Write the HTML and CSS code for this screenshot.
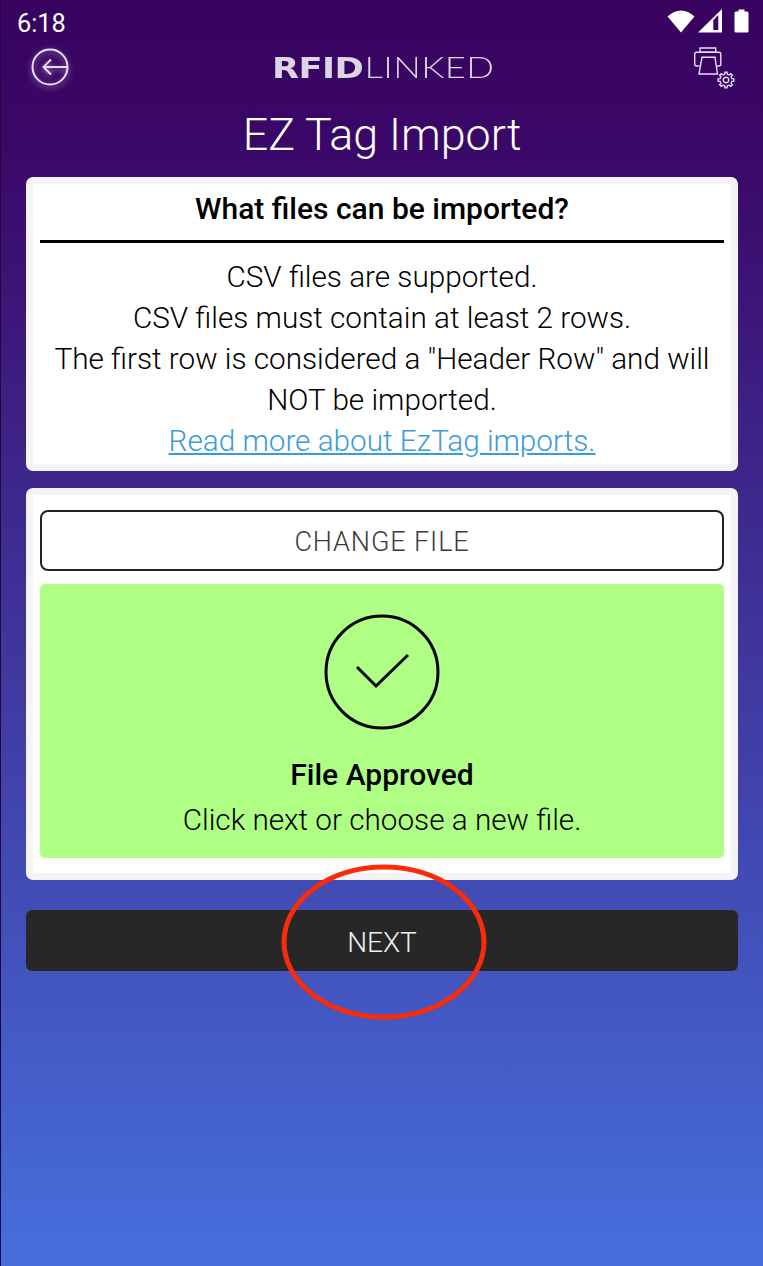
FILE: index.html
```html
<!DOCTYPE html>
<html>
  <head>
    <meta charset="utf-8">
    <title>EZ Tag Import</title>
    <link rel="stylesheet" href="styles.css">
  </head>
  <body>
    <div class="page">
      <div class="status-bar">
        <span class="status-time">6:18</span>
        <div class="status-icons">
          <svg class="wifi" width="28" height="23" viewBox="0 0 28 23">
            <path d="M0.5 6.5 Q7 0.5 14 0.5 Q21 0.5 27.5 6.5 L14 22.5 Z" fill="#fff"/>
          </svg>
          <svg class="signal" width="24" height="24" viewBox="0 0 24 24">
            <path d="M0 23.5 L24 0 V23.5 Z" fill="#fff"/>
            <path d="M15.3 11 L20.3 6 V21 H15.3 Z" fill="#3a0565"/>
          </svg>
          <svg width="15" height="24" viewBox="0 0 15 24">
            <path d="M4.5 0.5 H10.5 V2.5 H13 Q14.5 2.5 14.5 4 V22 Q14.5 23.5 13 23.5 H2 Q0.5 23.5 0.5 22 V4 Q0.5 2.5 2 2.5 H4.5 Z" fill="#fff"/>
          </svg>
        </div>
      </div>

      <div class="top-bar">
        <svg class="back-icon" width="44" height="44" viewBox="0 0 44 44">
          <circle cx="22" cy="22" r="17.5" fill="none" stroke="#e9dcf5" stroke-width="2"/>
          <path d="M39.5 22 H15.5 M23 14.5 L15.5 22 L23 29.5" fill="none" stroke="#e9dcf5" stroke-width="2"/>
        </svg>
        <div class="logo"><span class="logo-bold">RFID</span><span class="logo-thin">LINKED</span></div>
        <svg class="printer-icon" width="41" height="42" viewBox="0 0 41 42">
          <g fill="none" stroke="#e9dcf5" stroke-width="1.4">
            <path d="M6 1 H21.7 V5.3 H6 Z"/>
            <path d="M5.5 19 H2.5 Q0.7 19 0.7 17 V7.3 Q0.7 5.3 2.5 5.3 H25 Q26.8 5.3 26.8 7.3 V17 Q26.8 19 25 19 H22.5"/>
            <path d="M8 10.3 H21 L23.5 27 H5 Z"/>
            <g transform="translate(32 33)">
              <circle r="2.8"/>
              <path id="tooth" d="M5.54 -2.3 L5.85 -1.35 L7.92 -1.11 V1.11 L5.85 1.35 L5.54 2.3"/>
              <use href="#tooth" transform="rotate(45)"/>
              <use href="#tooth" transform="rotate(90)"/>
              <use href="#tooth" transform="rotate(135)"/>
              <use href="#tooth" transform="rotate(180)"/>
              <use href="#tooth" transform="rotate(225)"/>
              <use href="#tooth" transform="rotate(270)"/>
              <use href="#tooth" transform="rotate(315)"/>
            </g>
          </g>
        </svg>
      </div>

      <h1 class="page-title">EZ Tag Import</h1>

      <div class="card info-card">
        <div class="card-heading">What files can be imported?</div>
        <div class="card-text">
          <div>CSV files are supported.</div>
          <div>CSV files must contain at least 2 rows.</div>
          <div>The first row is considered a "Header Row" and will NOT be imported.</div>
          <a class="read-more" href="#">Read more about EzTag imports.</a>
        </div>
      </div>

      <div class="card file-card">
        <div class="change-file">CHANGE FILE</div>
        <div class="approved">
          <svg class="check-icon" width="116" height="116" viewBox="0 0 116 116">
            <circle cx="58" cy="58" r="56" fill="none" stroke="#000" stroke-width="3"/>
            <path d="M33 53 L52 72 L84 41" fill="none" stroke="#000" stroke-width="3"/>
          </svg>
          <div class="approved-title">File Approved</div>
          <div class="approved-text">Click next or choose a new file.</div>
        </div>
      </div>

      <div class="next-button">NEXT</div>

      <svg class="red-circle" width="210" height="160" viewBox="0 0 210 160">
        <ellipse cx="105" cy="80" rx="100" ry="75" fill="none" stroke="#f62c0a" stroke-width="5"/>
      </svg>
    </div>
  </body>
</html>
```

FILE: styles.css
```css
* {
  box-sizing: border-box;
}
html, body {
  margin: 0;
  padding: 0;
}
body {
  font-family: Roboto, "Liberation Sans", sans-serif;
  color: #000;
}
.page {
  position: relative;
  width: 763px;
  height: 1266px;
  overflow: hidden;
  border-left: 1px solid #23053f;
  background: linear-gradient(180deg, #38035f 0%, #3a0868 12%, #466fdd 100%);
}
.status-bar {
  display: flex;
  justify-content: space-between;
  align-items: center;
  height: 46px;
  padding: 0 14px 0 16px;
  color: #fff;
}
.status-time {
  font-size: 25.3px;
}
.status-icons {
  display: flex;
  align-items: center;
  margin-top: -4px;
}
.wifi {
  margin-right: 3px;
}
.signal {
  margin-right: 12px;
}
.top-bar {
  display: flex;
  justify-content: space-between;
  align-items: center;
  height: 44px;
  padding: 0 28px 0 27px;
}
.logo {
  display: flex;
  align-items: baseline;
  font-size: 28px;
  line-height: 44px;
  color: #dcd5e3;
  transform: scaleX(1.26);
}
.logo-bold {
  font-family: "DejaVu Sans", sans-serif;
  font-weight: bold;
  letter-spacing: -0.5px;
}
.logo-thin {
  font-family: Lato, sans-serif;
  font-weight: 300;
  letter-spacing: 0.3px;
  margin-left: 1px;
  font-size: 29px;
}
.back-icon {
  margin-top: -2px;
  filter: drop-shadow(0 2px 3px rgba(233, 220, 245, 0.6));
}
.printer-icon {
  margin-top: -1px;
}
.page-title {
  margin: 0;
  padding-top: 3px;
  height: 87px;
  font-size: 44.8px;
  font-weight: 300;
  line-height: 84px;
  text-align: center;
  color: #fff;
}
.card {
  margin: 0 25px;
  background: #fff;
  border: 7px solid #f4f3f6;
  border-radius: 7px;
}
.info-card {
  height: 294px;
  padding: 0 7px;
}
.card-heading {
  height: 59px;
  border-bottom: 3px solid #000;
  font-size: 30px;
  font-weight: 500;
  line-height: 50px;
  text-align: center;
}
.card-text {
  padding-top: 13px;
  font-size: 29.7px;
  font-weight: 300;
  line-height: 41px;
  text-align: center;
}
.read-more {
  color: #3a9bdc;
}
.file-card {
  height: 392px;
  margin-top: 17px;
  padding: 15px 7px 0;
}
.change-file {
  height: 61px;
  border: 2px solid #222;
  border-radius: 8px;
  font-size: 27px;
  font-weight: 300;
  line-height: 60px;
  letter-spacing: 0.9px;
  text-align: center;
  color: #3a3a3a;
}
.approved {
  height: 274px;
  margin-top: 13px;
  padding-top: 30px;
  border-radius: 5px;
  background: #aeff84;
  text-align: center;
}
.check-icon {
  display: block;
  margin: 0 auto;
}
.approved-title {
  margin-top: 22px;
  font-size: 30px;
  font-weight: 500;
  line-height: 45px;
}
.approved-text {
  font-size: 29.7px;
  font-weight: 300;
  line-height: 45px;
}
.next-button {
  height: 61px;
  margin: 30px 25px 0;
  border-radius: 6px;
  background: #272727;
  font-size: 28px;
  font-weight: 300;
  line-height: 66px;
  text-align: center;
  color: #eee;
}
.red-circle {
  position: absolute;
  left: 278px;
  top: 862px;
}
```
